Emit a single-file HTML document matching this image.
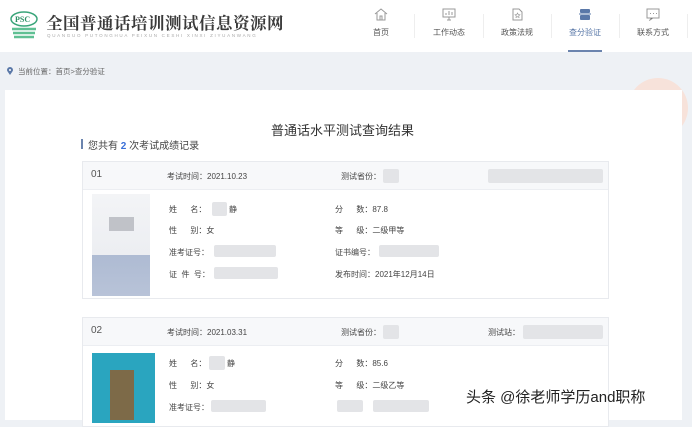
<!DOCTYPE html><html><head><meta charset="utf-8"><style>
*{margin:0;padding:0;box-sizing:border-box}
body{width:692px;height:420px;overflow:hidden;background:#eef1f5;font-family:"Liberation Sans","Noto Sans CJK SC",sans-serif;position:relative;color:#333}
.a{position:absolute;white-space:nowrap}
.hdr{position:absolute;left:0;top:0;width:692px;height:52px;background:#fff}
.nav{position:absolute;top:8px;width:68px;text-align:center;font-size:8px;color:#555}
.nav svg{display:block;margin:0 auto 6px}
.dv{position:absolute;top:14px;width:1px;height:24px;background:#eee}
.panel{position:absolute;left:5px;top:90px;width:677px;height:330px;background:#fff}
.card{position:absolute;left:82px;width:527px;border:1px solid #e8eaee;background:#fff}
.ch{height:28px;background:#f7f8fa;border-bottom:1px solid #eceef2;position:relative}
.s{font-size:8px;color:#444}
.blur{position:absolute;background:#e3e4e7;border-radius:2px}
</style></head><body>
<div class="hdr"></div>
<svg class="a" style="left:8px;top:10px" width="34" height="32" viewBox="0 0 34 32"><ellipse cx="16" cy="9" rx="13" ry="7" fill="none" stroke="#3aa57a" stroke-width="1.5"/><text x="7" y="12" font-size="8" font-family="Liberation Serif" font-weight="bold" fill="#2a8f63">PSC</text><path d="M4 19h24M5 23h22M6 27h20" stroke="#5fc093" stroke-width="2.5"/></svg>
<div class="a" style="left:46px;top:10px;font-size:16.5px;font-weight:bold;color:#3a3a3a;letter-spacing:0.5px;font-family:'Noto Serif CJK SC',serif">全国普通话培训测试信息资源网</div>
<div class="a" style="left:47px;top:33px;font-size:4.5px;color:#aaa;letter-spacing:1.7px">QUANGUO PUTONGHUA PEIXUN CESHI XINXI ZIYUANWANG</div>
<div class="nav" style="left:347px"><svg width="14" height="13" viewBox="0 0 14 13"><path d="M1 6L7 1l6 5M3 5v7h8V5M6 12V8h2v4" fill="none" stroke="#999"/></svg>首页</div>
<div class="dv" style="left:414px"></div>
<div class="nav" style="left:415px"><svg width="14" height="13" viewBox="0 0 14 13"><rect x="1" y="1" width="12" height="8" fill="none" stroke="#999"/><path d="M5 12h4M7 9v3M4 7V5M7 7V3M10 7V4" stroke="#999"/></svg>工作动态</div>
<div class="dv" style="left:483px"></div>
<div class="nav" style="left:483px"><svg width="14" height="13" viewBox="0 0 14 13"><path d="M3 1h6l3 3v8H3z" fill="none" stroke="#999"/><path d="M7.5 5l.8 1.6 1.6.2-1.2 1.1.3 1.6-1.5-.8-1.5.8.3-1.6-1.2-1.1 1.6-.2z" fill="none" stroke="#999" stroke-width=".7"/></svg>政策法规</div>
<div class="dv" style="left:551px"></div>
<div class="nav" style="left:551px;color:#5a78a8"><svg width="14" height="13" viewBox="0 0 14 13"><rect x="2" y="1" width="10" height="4" rx="1" fill="#5a78a8"/><rect x="2" y="7" width="10" height="5" rx="1" fill="#5a78a8"/><path d="M1 6h12" stroke="#5a78a8"/></svg>查分验证</div>
<div class="a" style="left:568px;top:50px;width:34px;height:2px;background:#6b84ae"></div>
<div class="dv" style="left:619px"></div>
<div class="nav" style="left:619px"><svg width="14" height="13" viewBox="0 0 14 13"><rect x="1" y="1" width="12" height="9" fill="none" stroke="#999"/><path d="M4 5.5h1M7 5.5h1M10 5.5h1M5 10l-1 2 3-2" stroke="#999"/></svg>联系方式</div>
<div class="dv" style="left:687px"></div>
<svg class="a" style="left:7px;top:67px" width="6" height="8" viewBox="0 0 6 8"><path d="M3 8C1 5 0 4 0 3a3 3 0 016 0c0 1-1 2-3 5z" fill="#5a78a8"/><circle cx="3" cy="3" r="1" fill="#fff"/></svg>
<div class="a" style="left:18px;top:66px;font-size:7.5px;color:#666">当前位置：首页&gt;查分验证</div>
<div class="a" style="left:628px;top:78px;width:60px;height:60px;border-radius:50%;background:#f7e2da"></div>
<div class="panel"></div>
<div class="a" style="left:271px;top:120px;font-size:13px;color:#333">普通话水平测试查询结果</div>
<div class="a" style="left:81px;top:139px;width:2px;height:10px;background:#6b84ae"></div>
<div class="a" style="left:88px;top:137px;font-size:10px;color:#444">您共有 <b style="color:#3a6fd8">2</b> 次考试成绩记录</div>

<div class="card" style="top:161px;height:138px"><div class="ch">
<div class="a" style="left:8px;top:7px;font-size:10px;color:#555">01</div>
<div class="a s" style="left:84px;top:9px">考试时间：2021.10.23</div>
<div class="a s" style="left:258px;top:9px">测试省份：</div><div class="blur" style="left:300px;top:7px;width:16px;height:14px"></div>
<div class="blur" style="left:405px;top:7px;width:115px;height:14px"></div></div>
<div class="a" style="left:9px;top:32px;width:58px;height:102px;background:linear-gradient(#f3f4f6 0,#eceef2 60%,#aebbd3 60%,#b8c3d8 100%)"></div>
<div class="a" style="left:26px;top:55px;width:25px;height:14px;background:#c0c2c8"></div>
<div class="a s" style="left:86px;top:42px">姓&nbsp;&nbsp;&nbsp;&nbsp;&nbsp;&nbsp;名：</div><div class="blur" style="left:129px;top:40px;width:15px;height:14px"></div><div class="a s" style="left:146px;top:42px">静</div>
<div class="a s" style="left:86px;top:63px">性&nbsp;&nbsp;&nbsp;&nbsp;&nbsp;&nbsp;别：女</div>
<div class="a s" style="left:86px;top:85px">准考证号：</div><div class="blur" style="left:131px;top:83px;width:62px;height:12px"></div>
<div class="a s" style="left:86px;top:107px">证&nbsp;&nbsp;件&nbsp;&nbsp;号：</div><div class="blur" style="left:131px;top:105px;width:64px;height:12px"></div>
<div class="a s" style="left:252px;top:42px">分&nbsp;&nbsp;&nbsp;&nbsp;&nbsp;&nbsp;数：87.8</div>
<div class="a s" style="left:252px;top:63px">等&nbsp;&nbsp;&nbsp;&nbsp;&nbsp;&nbsp;级：二级甲等</div>
<div class="a s" style="left:252px;top:85px">证书编号：</div><div class="blur" style="left:296px;top:83px;width:60px;height:12px"></div>
<div class="a s" style="left:252px;top:107px">发布时间：2021年12月14日</div>
</div>

<div class="card" style="top:317px;height:110px"><div class="ch">
<div class="a" style="left:8px;top:7px;font-size:10px;color:#555">02</div>
<div class="a s" style="left:84px;top:9px">考试时间：2021.03.31</div>
<div class="a s" style="left:258px;top:9px">测试省份：</div><div class="blur" style="left:300px;top:7px;width:16px;height:14px"></div>
<div class="a s" style="left:405px;top:9px">测试站：</div><div class="blur" style="left:440px;top:7px;width:80px;height:14px"></div></div>
<div class="a" style="left:9px;top:35px;width:63px;height:70px;background:#2aa5bf"></div>
<div class="a" style="left:27px;top:52px;width:24px;height:50px;background:#7d6a48"></div>
<div class="a s" style="left:86px;top:40px">姓&nbsp;&nbsp;&nbsp;&nbsp;&nbsp;&nbsp;名：</div><div class="blur" style="left:126px;top:38px;width:16px;height:14px"></div><div class="a s" style="left:144px;top:40px">静</div>
<div class="a s" style="left:86px;top:62px">性&nbsp;&nbsp;&nbsp;&nbsp;&nbsp;&nbsp;别：女</div>
<div class="a s" style="left:86px;top:84px">准考证号：</div><div class="blur" style="left:128px;top:82px;width:55px;height:12px"></div>
<div class="a s" style="left:252px;top:40px">分&nbsp;&nbsp;&nbsp;&nbsp;&nbsp;&nbsp;数：85.6</div>
<div class="a s" style="left:252px;top:62px">等&nbsp;&nbsp;&nbsp;&nbsp;&nbsp;&nbsp;级：二级乙等</div>
<div class="blur" style="left:254px;top:82px;width:26px;height:12px"></div><div class="blur" style="left:290px;top:82px;width:56px;height:12px"></div>
</div>
<div class="a" style="left:466px;top:386px;font-size:15px;color:#222;text-shadow:0 0 2px #fff">头条 @徐老师学历and职称</div>
</body></html>
